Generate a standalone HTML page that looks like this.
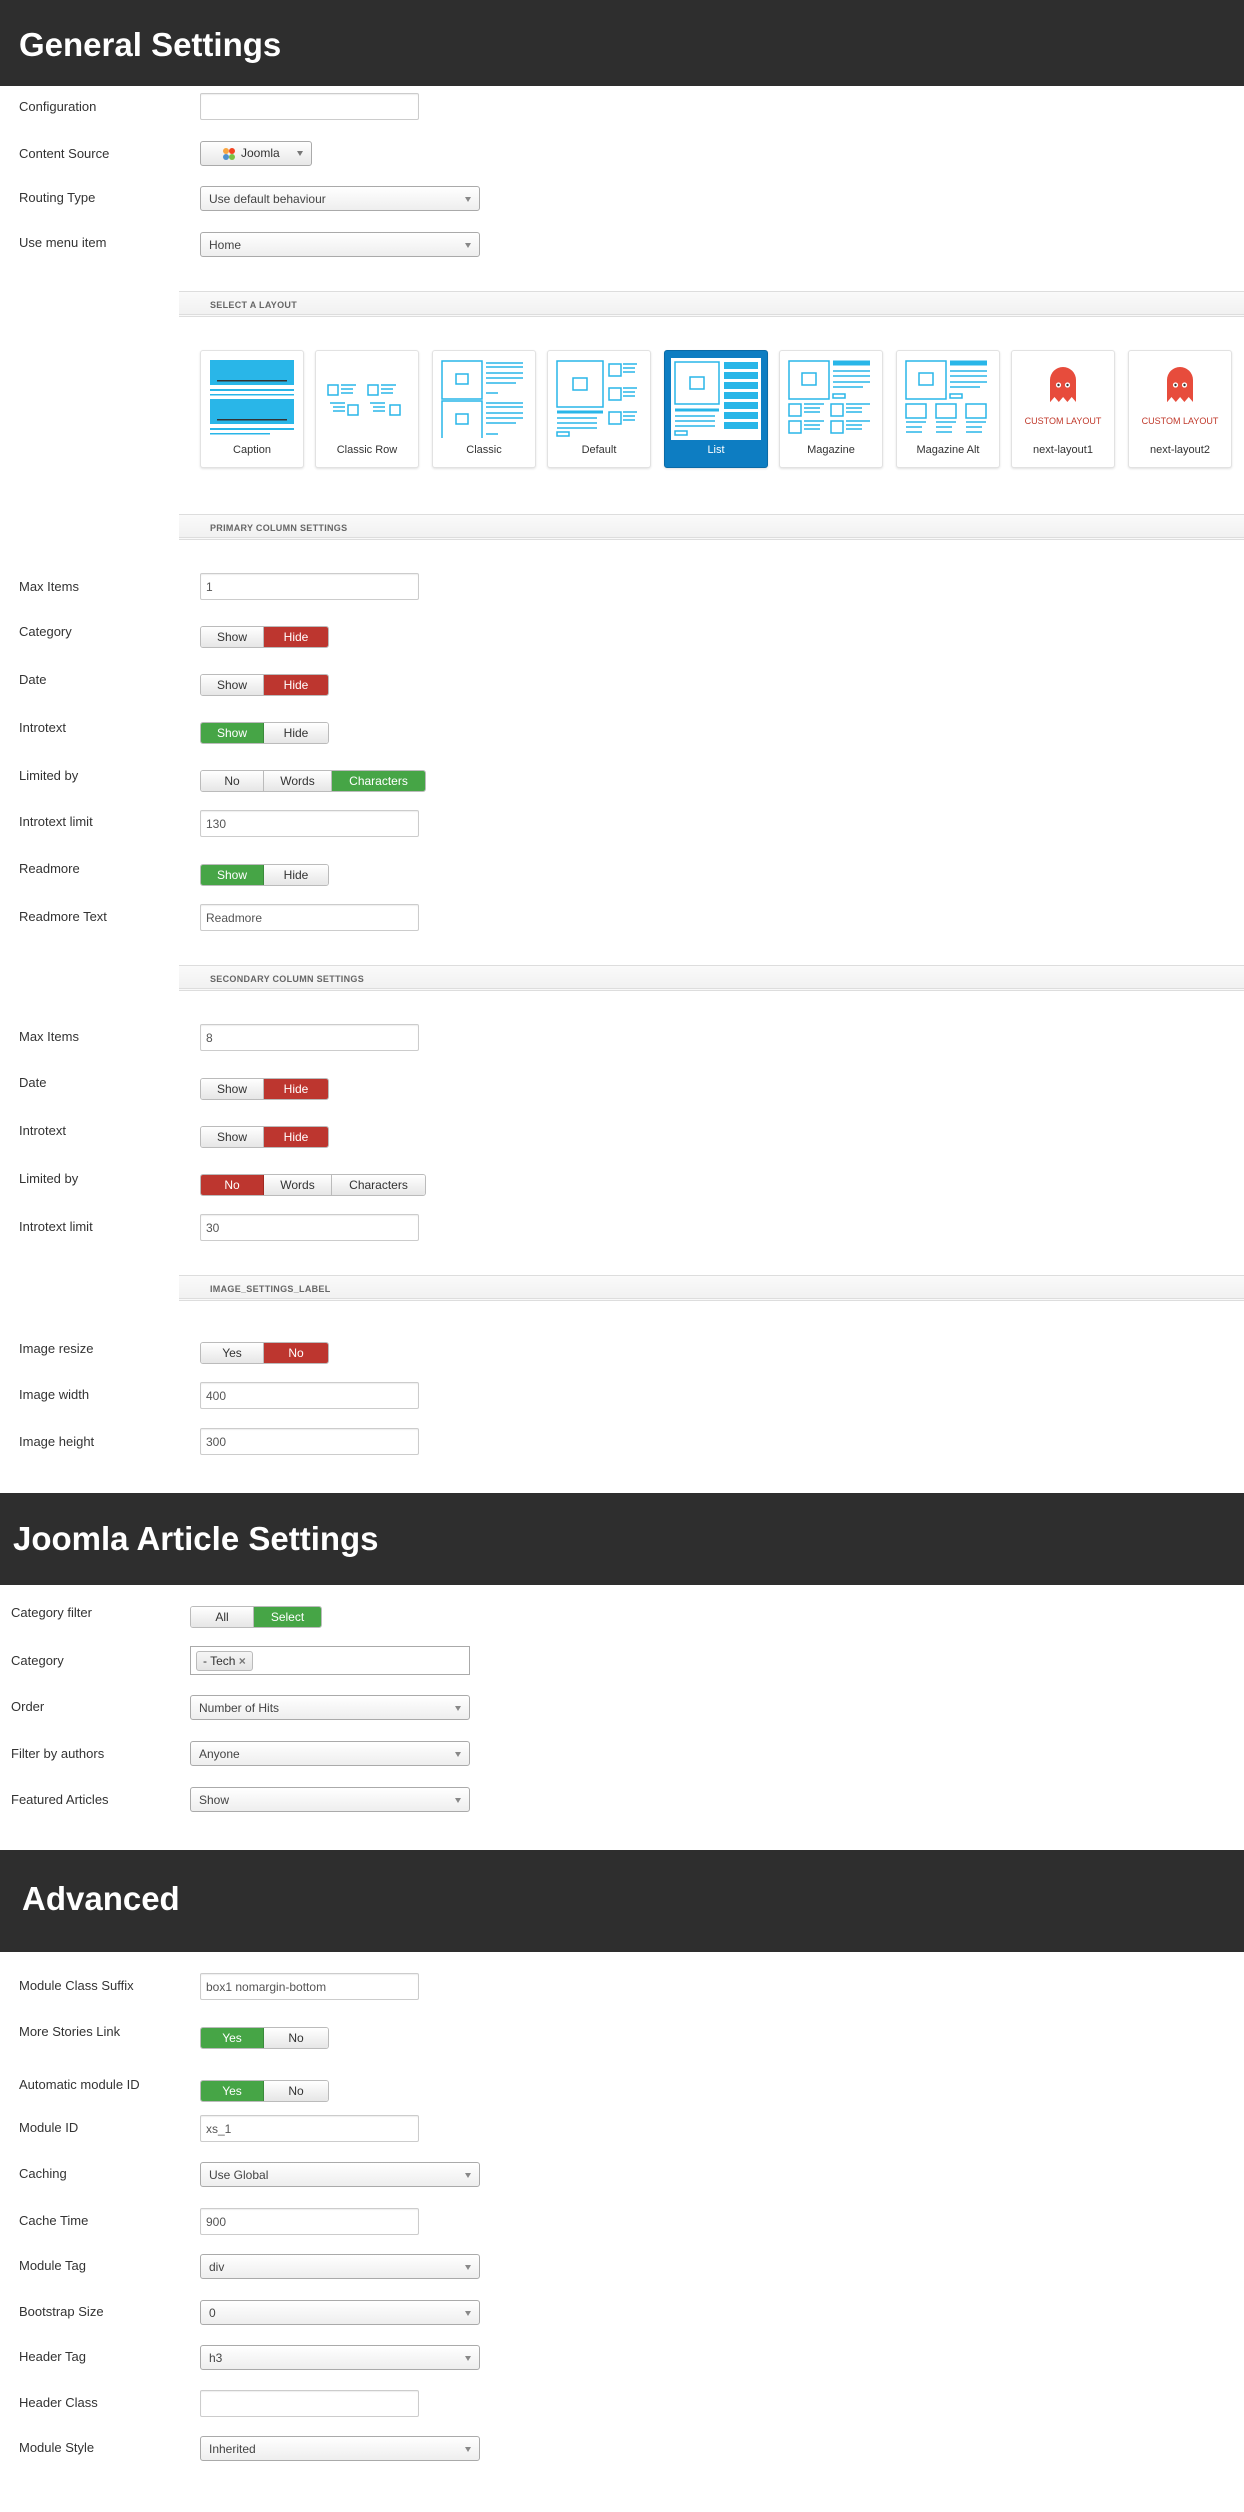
<!DOCTYPE html>
<html><head><meta charset="utf-8">
<style>
*{box-sizing:border-box;margin:0;padding:0}
body{width:1244px;height:2512px;background:#fff;font-family:"Liberation Sans",Arial,sans-serif;color:#333;position:relative;overflow:hidden}
.a{position:absolute}
.hd{position:absolute;left:0;width:1244px;background:#2e2e2e;color:#fff;font-weight:bold;font-size:33px}
.hd span{position:absolute}
.lb{position:absolute;font-size:13px;color:#333;line-height:16px;white-space:nowrap}
.in{position:absolute;width:219px;height:27px;border:1px solid #ccc;border-radius:2px;background:#fff;box-shadow:inset 0 1px 1px rgba(0,0,0,.07);font-size:12px;color:#555;padding:6px 5px;line-height:14px}
.sel{position:absolute;width:280px;height:25px;border:1px solid #aaa;border-radius:3px;background:linear-gradient(#fff,#eee);font-size:12px;color:#444;padding:5px 8px;line-height:14px}
.sel:after{content:"";position:absolute;right:8px;top:10px;border-left:3px solid transparent;border-right:3px solid transparent;border-top:5px solid #888}
.tg{position:absolute;height:22px;display:flex;border-radius:3px;overflow:hidden;border:1px solid #bbb}
.tg div{height:20px;line-height:20px;text-align:center;font-size:12px;color:#333;background:linear-gradient(#fff,#e6e6e6);border-right:1px solid #bbb}
.tg div:last-child{border-right:0}
.tg .r{background:#bd362f;color:#fff;border-color:#a02820}
.tg .g{background:#46a546;color:#fff;border-color:#3a8a3a}
.bar{position:absolute;left:179px;width:1065px;height:26px;background:linear-gradient(#fafafa,#f1f1f1);border-top:1px solid #ddd;border-bottom:3px double #ddd;font-size:9px;font-weight:bold;color:#666;padding:8px 0 0 31px;letter-spacing:.3px}
.card{position:absolute;top:350px;width:104px;height:118px;border:1px solid #e2e2e2;border-radius:3px;background:#fff;box-shadow:0 1px 2px rgba(0,0,0,.12)}
.card svg{position:absolute;left:6px;top:7px}
.card .t{position:absolute;left:0;right:0;top:93px;text-align:center;font-size:11px;color:#333}
.card.sel2{background:#0d7dc2;border-color:#0a6aa6}
.card.sel2 .t{color:#fff}
</style></head><body>

<div class="hd" style="top:0;height:86px"><span style="left:19px;top:26px">General Settings</span></div>

<div class="lb" style="left:19px;top:99px">Configuration</div>
<div class="in" style="left:200px;top:93px"></div>
<div class="lb" style="left:19px;top:146px">Content Source</div>
<div class="a" style="left:200px;top:141px;width:112px;height:25px;border:1px solid #aaa;border-radius:3px;background:linear-gradient(#fff,#e8e8e8);font-size:12px;line-height:23px;padding-left:21px">
<svg width="14" height="14" viewBox="0 0 14 14" style="position:absolute;left:21px;top:5px"><circle cx="4" cy="4" r="3" fill="#f9a541"/><circle cx="10" cy="4" r="3" fill="#f44321"/><circle cx="4" cy="10" r="3" fill="#5091cd"/><circle cx="10" cy="10" r="3" fill="#7ac143"/></svg>
<span style="position:absolute;left:40px">Joomla</span><span style="position:absolute;left:96px;top:9px;border-left:3px solid transparent;border-right:3px solid transparent;border-top:5px solid #777"></span></div>
<div class="lb" style="left:19px;top:190px">Routing Type</div>
<div class="sel" style="left:200px;top:186px">Use default behaviour</div>
<div class="lb" style="left:19px;top:235px">Use menu item</div>
<div class="sel" style="left:200px;top:232px">Home</div>

<div class="bar" style="top:291px">SELECT A LAYOUT</div>

<!-- cards -->
<div class="card" style="left:200px"><svg width="90" height="80" viewBox="0 0 90 80"><rect x="3" y="2" width="84" height="25" fill="#29b6e8"/><rect x="10" y="22" width="70" height="1.5" fill="#333"/><rect x="3" y="31" width="84" height="2" fill="#29b6e8"/><rect x="3" y="36" width="84" height="1.5" fill="#29b6e8"/><rect x="3" y="41" width="84" height="25" fill="#29b6e8"/><rect x="10" y="61" width="70" height="1.5" fill="#333"/><rect x="3" y="70" width="84" height="2" fill="#29b6e8"/><rect x="3" y="75" width="60" height="1.5" fill="#29b6e8"/></svg><div class="t">Caption</div></div>

<div class="card" style="left:315px"><svg width="90" height="80" viewBox="0 0 90 80" fill="none" stroke="#29b6e8" stroke-width="1.5"><rect x="6" y="27" width="10" height="10"/><path d="M19 27h15M19 31h12M19 35h12"/><rect x="46" y="27" width="10" height="10"/><path d="M59 27h15M59 31h12M59 35h12"/><rect x="26" y="47" width="10" height="10"/><path d="M8 45h15M11 49h12M11 53h12"/><rect x="68" y="47" width="10" height="10"/><path d="M48 45h15M51 49h12M51 53h12"/></svg><div class="t">Classic Row</div></div>

<div class="card" style="left:432px"><svg width="90" height="80" viewBox="0 0 90 80" fill="none" stroke="#29b6e8" stroke-width="1.5"><rect x="3" y="3" width="40" height="38"/><rect x="3" y="43" width="40" height="38"/><rect x="17" y="16" width="12" height="10"/><rect x="17" y="56" width="12" height="10"/><path d="M47 5h37M47 9h37M47 15h37M47 20h37M47 25h30M47 35h12M47 45h37M47 49h37M47 55h37M47 60h37M47 65h30M47 76h12" /></svg><div class="t">Classic</div></div>

<div class="card" style="left:547px"><svg width="90" height="80" viewBox="0 0 90 80" fill="none" stroke="#29b6e8" stroke-width="1.5"><rect x="3" y="3" width="46" height="46"/><rect x="19" y="20" width="14" height="12"/><rect x="55" y="6" width="12" height="12"/><rect x="55" y="30" width="12" height="12"/><rect x="55" y="54" width="12" height="12"/><path d="M69 6h14M69 10h12M69 14h12M69 30h14M69 34h12M69 38h12M69 54h14M69 58h12M69 62h12"/><path d="M3 54h46" stroke-width="3"/><path d="M3 60h40M3 65h40M3 70h40"/><rect x="3" y="74" width="12" height="4"/></svg><div class="t">Default</div></div>

<div class="card sel2" style="left:664px"><svg width="90" height="82" viewBox="0 0 90 82"><rect x="0" y="0" width="90" height="82" fill="#fff"/><g fill="none" stroke="#29b6e8" stroke-width="1.5"><rect x="4" y="4" width="44" height="42"/><rect x="19" y="19" width="14" height="12"/><path d="M4 52h44" stroke-width="3"/><path d="M4 58h40M4 63h40M4 68h40"/><rect x="4" y="73" width="12" height="4"/></g><g fill="#29b6e8"><rect x="53" y="4" width="34" height="7"/><rect x="53" y="14" width="34" height="7"/><rect x="53" y="24" width="34" height="7"/><rect x="53" y="34" width="34" height="7"/><rect x="53" y="44" width="34" height="7"/><rect x="53" y="54" width="34" height="7"/><rect x="53" y="64" width="34" height="7"/></g></svg><div class="t">List</div></div>

<div class="card" style="left:779px"><svg width="90" height="80" viewBox="0 0 90 80" fill="none" stroke="#29b6e8" stroke-width="1.5"><rect x="3" y="3" width="40" height="38"/><rect x="16" y="15" width="14" height="12"/><path d="M47 5h37" stroke-width="5"/><path d="M47 13h37M47 18h37M47 24h37M47 29h30"/><rect x="47" y="36" width="12" height="4"/><rect x="3" y="46" width="12" height="12"/><rect x="45" y="46" width="12" height="12"/><rect x="3" y="63" width="12" height="12"/><rect x="45" y="63" width="12" height="12"/><path d="M18 46h20M18 50h16M18 54h16M60 46h24M60 50h16M60 54h16M18 63h20M18 67h16M18 71h16M60 63h24M60 67h16M60 71h16"/></svg><div class="t">Magazine</div></div>

<div class="card" style="left:896px"><svg width="90" height="80" viewBox="0 0 90 80" fill="none" stroke="#29b6e8" stroke-width="1.5"><rect x="3" y="3" width="40" height="38"/><rect x="16" y="15" width="14" height="12"/><path d="M47 5h37" stroke-width="5"/><path d="M47 13h37M47 18h37M47 24h37M47 29h30"/><rect x="47" y="36" width="12" height="4"/><rect x="3" y="46" width="20" height="14"/><rect x="33" y="46" width="20" height="14"/><rect x="63" y="46" width="20" height="14"/><path d="M3 64h20M3 69h16M3 74h16M33 64h20M33 69h16M33 74h16M63 64h20M63 69h16M63 74h16"/></svg><div class="t">Magazine Alt</div></div>

<div class="card" style="left:1011px"><svg width="90" height="80" viewBox="0 0 90 80"><path d="M32 44V22a13 13 0 0 1 26 0v22l-4.3-5-4.3 5-4.3-5-4.3 5-4.3-5-4.3 5z" fill="#e74c3c"/><circle cx="40.5" cy="27" r="2.6" fill="#fff"/><circle cx="49.5" cy="27" r="2.6" fill="#fff"/><circle cx="40.5" cy="27" r="1.2" fill="#333"/><circle cx="49.5" cy="27" r="1.2" fill="#333"/><text x="45" y="66" font-size="9" text-anchor="middle" fill="#c0392b" font-family="Liberation Sans,sans-serif">CUSTOM LAYOUT</text></svg><div class="t">next-layout1</div></div>

<div class="card" style="left:1128px"><svg width="90" height="80" viewBox="0 0 90 80"><path d="M32 44V22a13 13 0 0 1 26 0v22l-4.3-5-4.3 5-4.3-5-4.3 5-4.3-5-4.3 5z" fill="#e74c3c"/><circle cx="40.5" cy="27" r="2.6" fill="#fff"/><circle cx="49.5" cy="27" r="2.6" fill="#fff"/><circle cx="40.5" cy="27" r="1.2" fill="#333"/><circle cx="49.5" cy="27" r="1.2" fill="#333"/><text x="45" y="66" font-size="9" text-anchor="middle" fill="#c0392b" font-family="Liberation Sans,sans-serif">CUSTOM LAYOUT</text></svg><div class="t">next-layout2</div></div>

<div class="bar" style="top:514px">PRIMARY COLUMN SETTINGS</div>
<div class="lb" style="left:19px;top:579px">Max Items</div>
<div class="in" style="left:200px;top:573px">1</div>
<div class="lb" style="left:19px;top:624px">Category</div>
<div class="tg" style="left:200px;top:626px"><div style="width:63px">Show</div><div class="r" style="width:64px">Hide</div></div>
<div class="lb" style="left:19px;top:672px">Date</div>
<div class="tg" style="left:200px;top:674px"><div style="width:63px">Show</div><div class="r" style="width:64px">Hide</div></div>
<div class="lb" style="left:19px;top:720px">Introtext</div>
<div class="tg" style="left:200px;top:722px"><div class="g" style="width:63px">Show</div><div style="width:64px">Hide</div></div>
<div class="lb" style="left:19px;top:768px">Limited by</div>
<div class="tg" style="left:200px;top:770px"><div style="width:63px">No</div><div style="width:68px">Words</div><div class="g" style="width:93px">Characters</div></div>
<div class="lb" style="left:19px;top:814px">Introtext limit</div>
<div class="in" style="left:200px;top:810px">130</div>
<div class="lb" style="left:19px;top:861px">Readmore</div>
<div class="tg" style="left:200px;top:864px"><div class="g" style="width:63px">Show</div><div style="width:64px">Hide</div></div>
<div class="lb" style="left:19px;top:909px">Readmore Text</div>
<div class="in" style="left:200px;top:904px">Readmore</div>

<div class="bar" style="top:965px">SECONDARY COLUMN SETTINGS</div>
<div class="lb" style="left:19px;top:1029px">Max Items</div>
<div class="in" style="left:200px;top:1024px">8</div>
<div class="lb" style="left:19px;top:1075px">Date</div>
<div class="tg" style="left:200px;top:1078px"><div style="width:63px">Show</div><div class="r" style="width:64px">Hide</div></div>
<div class="lb" style="left:19px;top:1123px">Introtext</div>
<div class="tg" style="left:200px;top:1126px"><div style="width:63px">Show</div><div class="r" style="width:64px">Hide</div></div>
<div class="lb" style="left:19px;top:1171px">Limited by</div>
<div class="tg" style="left:200px;top:1174px"><div class="r" style="width:63px">No</div><div style="width:68px">Words</div><div style="width:93px">Characters</div></div>
<div class="lb" style="left:19px;top:1219px">Introtext limit</div>
<div class="in" style="left:200px;top:1214px">30</div>

<div class="bar" style="top:1275px">IMAGE_SETTINGS_LABEL</div>
<div class="lb" style="left:19px;top:1341px">Image resize</div>
<div class="tg" style="left:200px;top:1342px"><div style="width:63px">Yes</div><div class="r" style="width:64px">No</div></div>
<div class="lb" style="left:19px;top:1387px">Image width</div>
<div class="in" style="left:200px;top:1382px">400</div>
<div class="lb" style="left:19px;top:1434px">Image height</div>
<div class="in" style="left:200px;top:1428px">300</div>

<div class="hd" style="top:1493px;height:92px"><span style="left:13px;top:27px">Joomla Article Settings</span></div>
<div class="lb" style="left:11px;top:1605px">Category filter</div>
<div class="tg" style="left:190px;top:1606px"><div style="width:63px">All</div><div class="g" style="width:67px">Select</div></div>
<div class="lb" style="left:11px;top:1653px">Category</div>
<div class="a" style="left:190px;top:1646px;width:280px;height:29px;border:1px solid #aaa;background:#fff"><div style="position:absolute;left:5px;top:4px;height:20px;padding:0 6px;border:1px solid #bbb;border-radius:3px;background:linear-gradient(#f6f6f6,#e4e4e4);font-size:12px;line-height:18px">- Tech <span style="color:#777;font-weight:bold">×</span></div></div>
<div class="lb" style="left:11px;top:1699px">Order</div>
<div class="sel" style="left:190px;top:1695px">Number of Hits</div>
<div class="lb" style="left:11px;top:1746px">Filter by authors</div>
<div class="sel" style="left:190px;top:1741px">Anyone</div>
<div class="lb" style="left:11px;top:1792px">Featured Articles</div>
<div class="sel" style="left:190px;top:1787px">Show</div>

<div class="hd" style="top:1850px;height:102px"><span style="left:22px;top:30px">Advanced</span></div>
<div class="lb" style="left:19px;top:1978px">Module Class Suffix</div>
<div class="in" style="left:200px;top:1973px">box1 nomargin-bottom</div>
<div class="lb" style="left:19px;top:2024px">More Stories Link</div>
<div class="tg" style="left:200px;top:2027px"><div class="g" style="width:63px">Yes</div><div style="width:64px">No</div></div>
<div class="lb" style="left:19px;top:2077px">Automatic module ID</div>
<div class="tg" style="left:200px;top:2080px"><div class="g" style="width:63px">Yes</div><div style="width:64px">No</div></div>
<div class="lb" style="left:19px;top:2120px">Module ID</div>
<div class="in" style="left:200px;top:2115px">xs_1</div>
<div class="lb" style="left:19px;top:2166px">Caching</div>
<div class="sel" style="left:200px;top:2162px">Use Global</div>
<div class="lb" style="left:19px;top:2213px">Cache Time</div>
<div class="in" style="left:200px;top:2208px">900</div>
<div class="lb" style="left:19px;top:2258px">Module Tag</div>
<div class="sel" style="left:200px;top:2254px">div</div>
<div class="lb" style="left:19px;top:2304px">Bootstrap Size</div>
<div class="sel" style="left:200px;top:2300px">0</div>
<div class="lb" style="left:19px;top:2349px">Header Tag</div>
<div class="sel" style="left:200px;top:2345px">h3</div>
<div class="lb" style="left:19px;top:2395px">Header Class</div>
<div class="in" style="left:200px;top:2390px"></div>
<div class="lb" style="left:19px;top:2440px">Module Style</div>
<div class="sel" style="left:200px;top:2436px">Inherited</div>
</body></html>
